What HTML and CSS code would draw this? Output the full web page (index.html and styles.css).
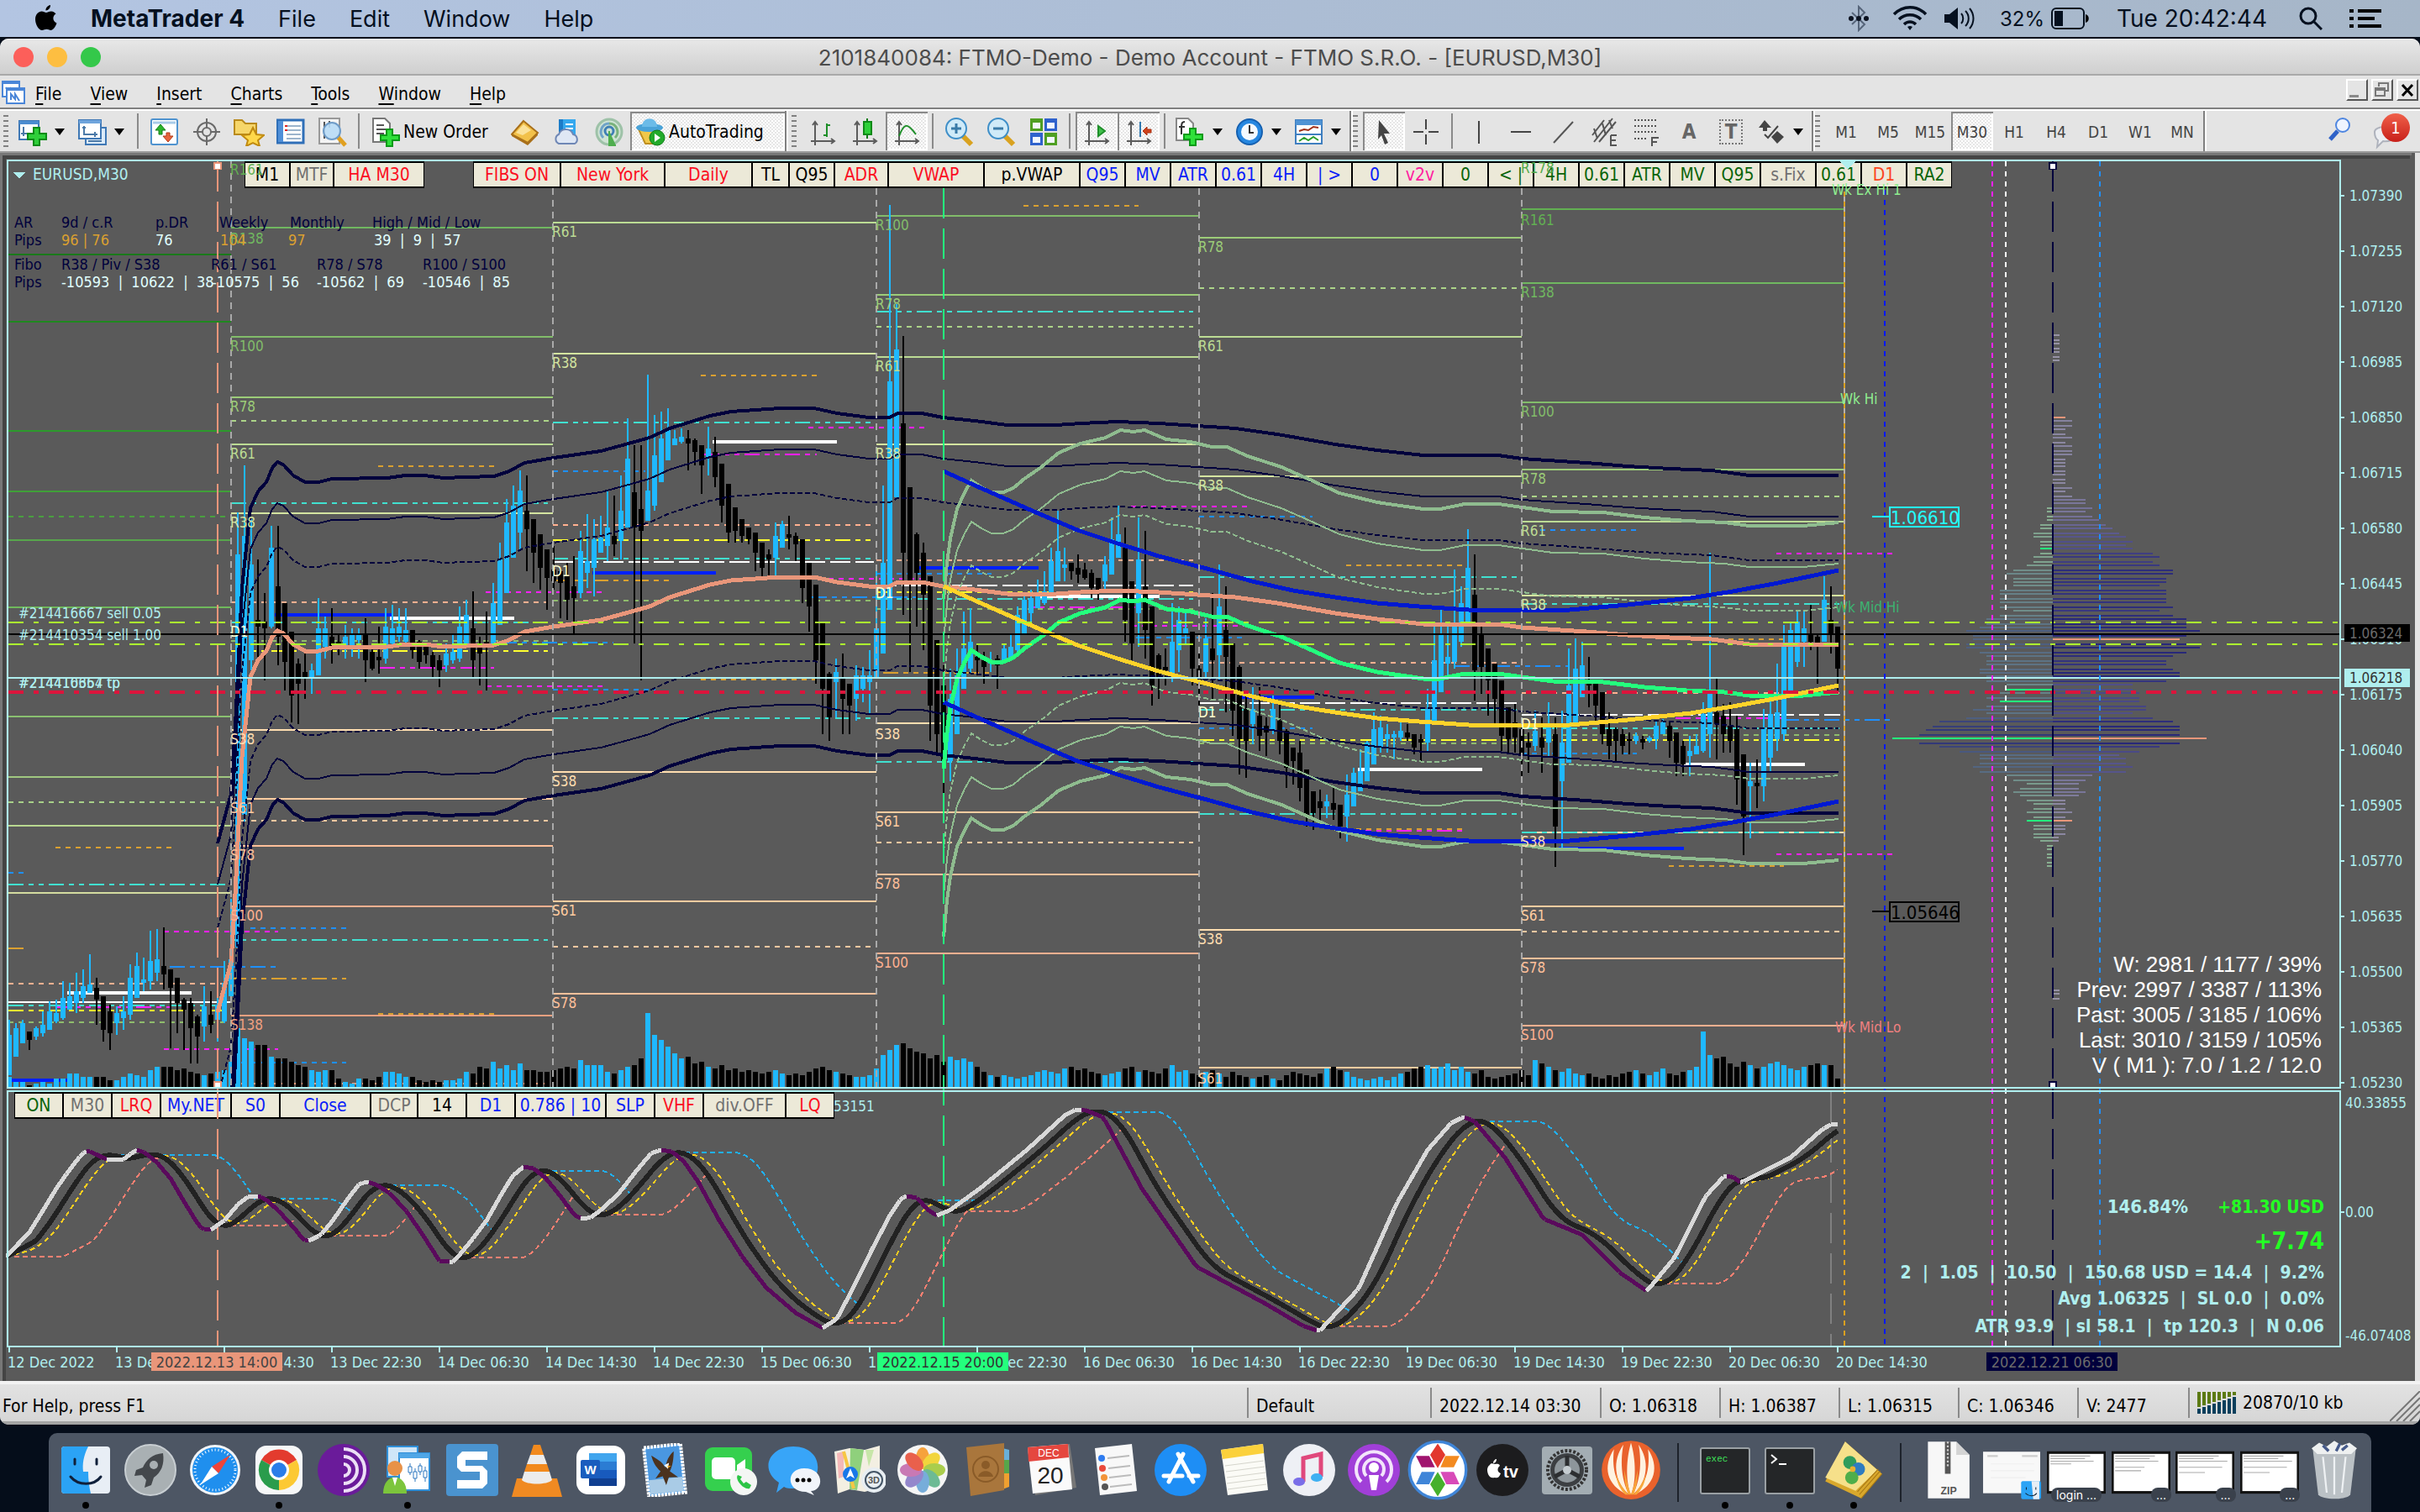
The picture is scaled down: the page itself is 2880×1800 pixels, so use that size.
FILE: index.html
```html
<!DOCTYPE html>
<html lang="en">
<head>
    <meta charset="UTF-8">
    <meta name="viewport" content="width=device-width, initial-scale=1.0">
    <title>MetaTrader 4</title>
    <link rel="stylesheet" href="styles.css">
</head>
<body>
    <!-- macOS menu bar -->
    <header class="menubar">
        <button class="apple" aria-label="Apple menu">
            <svg width="26" height="32" viewBox="0 0 26 32"><path d="M18 0c.3 3-2.500 6.500-5.500 6.500C12 3.500 15 .5 18 0zM13 9c1.500 0 3-1.500 6-1.500 2.500 0 4.500 1.500 5.500 3-4.500 2.500-4 9 1 11C24 26 21 30 18.500 30c-2 0-3-1.200-5-1.200S10 30 8 30C4 30 0 23 0 17c0-6 4-9.500 7.500-9.500C10 7.500 11.500 9 13 9z"/></svg>
        </button>
        <strong>MetaTrader 4</strong>
        <button>File</button>
        <button>Edit</button>
        <button>Window</button>
        <button>Help</button>
        <div class="status">
            <svg width="24" height="32" viewBox="0 0 24 32" fill="none" stroke="#56657a" stroke-width="2"><path d="M4 9l15 14-7 7V2l7 7L4 23"/><g fill="#0b1220" stroke="none"><circle cx="3" cy="16" r="3"/><circle cx="12" cy="16" r="3"/><circle cx="21" cy="16" r="3"/></g></svg>
            <svg class="wifi" width="42" height="30" viewBox="0 0 42 30" fill="none" stroke="#05101f" stroke-width="3.500"><path d="M2 10C13-1 29-1 40 10M8 16c7-7 19-7 26 0M14 22c4-4 10-4 14 0"/><path d="M18 25a5 5 0 0 1 6 0l-3 4z" fill="#05101f" stroke="none"/></svg>
            <svg width="36" height="28" viewBox="0 0 36 28" fill="none" stroke="#05101f" stroke-width="2"><path d="M0 9h6l10-8v26L6 19H0z" fill="#05101f" stroke="none"/><path d="M20 8c3 3 3 9 0 12M25 5c5 5 5 13 0 18M30 2c6 7 6 17 0 24"/></svg>
            <span class="pct">32%</span>
            <svg class="battery" width="46" height="26" viewBox="0 0 46 26"><rect x="1" y="1" width="38" height="24" rx="5" fill="none" stroke="#05101f" stroke-width="2"/><rect x="4" y="4" width="10" height="18" fill="#05101f"/><path d="M41 8c5 1 5 9 0 10z"/></svg>
            <time>Tue 20:42:44</time>
            <svg class="glass" width="28" height="28" viewBox="0 0 28 28" fill="none" stroke="#05101f" stroke-width="3"><circle cx="11" cy="11" r="9"/><path d="M18 18l9 9"/></svg>
            <svg width="38" height="22" viewBox="0 0 38 22"><path d="M0 0h5v4H0zM10 0h28v4H10zM0 9h5v4H0zM10 9h20v4H10zM0 18h5v4H0zM10 18h28v4H10z"/></svg>
        </div>
    </header>

    <main class="window">
        <div class="titlebar">
            <div class="lights">
                <button class="close" aria-label="Close"></button>
                <button class="mini" aria-label="Minimize"></button>
                <button class="zoom" aria-label="Zoom"></button>
            </div>
            <h1>2101840084: FTMO-Demo - Demo Account - FTMO S.R.O. - [EURUSD,M30]</h1>
        </div>

        <nav class="appmenu">
            <svg width="30" height="30" viewBox="0 0 30 30" fill="#fff" stroke="#4a86d8" stroke-width="2"><rect x="3" y="2" width="20" height="18"/><path d="M3 4h20M7 9l3 6 3-6" /><rect x="8" y="10" width="21" height="18"/><path d="M8 12h21M13 24v-7l5 6v-6l5 8"/></svg>
            <button><u>F</u>ile</button>
            <button><u>V</u>iew</button>
            <button><u>I</u>nsert</button>
            <button><u>C</u>harts</button>
            <button><u>T</u>ools</button>
            <button><u>W</u>indow</button>
            <button><u>H</u>elp</button>
            <div class="mdi">
                <button aria-label="Minimize chart"><svg width="22" height="22"><path d="M2 17h11v3H2z" fill="#888"/></svg></button>
                <button aria-label="Restore chart"><svg width="22" height="22" fill="none" stroke="#777" stroke-width="2"><path d="M7 7V3h11v9h-3M3 9h11v9H3zM3 11h11"/></svg></button>
                <button aria-label="Close chart"><svg width="22" height="22" stroke="#000" stroke-width="3"><path d="M5 5l12 13M17 5L5 18"/></svg></button>
            </div>
        </nav>

        <div class="toolbar">
            <div class="group">
                <i class="grip"></i>
                <button class="drop" aria-label="New chart"><svg width="34" height="34" viewBox="0 0 34 34"><rect x="1" y="4" width="23" height="22" fill="#fff" stroke="#3f78b5" stroke-width="2"/><path d="M1 4h23v4H1z" fill="#4b8cd0"/><path d="M6 11v11M3 19h12" stroke="#4c7aa8" stroke-width="2"/><path d="M18 12h7v7h8v7h-8v7h-7v-7h-7v-7h7z" fill="#2fcf3a" stroke="#0a8a18" stroke-width="2"/></svg><b></b></button>
                <button class="drop" aria-label="Profiles"><svg width="34" height="34" viewBox="0 0 34 34"><rect x="9" y="12" width="24" height="20" fill="#dcebf8" stroke="#3f78b5" stroke-width="2"/><rect x="1" y="3" width="26" height="22" fill="#fff" stroke="#3f78b5" stroke-width="2"/><path d="M1 3h26v4H1z" fill="#6fa4dc"/><path d="M7 10v10h16M5 12h4M20 17v6M12 28h16" stroke="#4c7aa8" stroke-width="2" fill="none"/></svg><b></b></button>
                <i class="sep"></i>
                <button aria-label="Market Watch"><svg width="34" height="34" viewBox="0 0 34 34"><rect x="1" y="2" width="31" height="30" rx="2" fill="#fff" stroke="#4f93cf" stroke-width="2"/><path d="M3 6h27" stroke="#a8cbe8" stroke-width="3"/><path d="M12 8l6 7h-4v5h-4v-5H6z" fill="#2db52d" stroke="#14801a"/><path d="M21 29l6-7h-4v-4h-4v4h-4z" fill="#e8643c" stroke="#b03a18"/></svg></button>
                <button aria-label="Data Window"><svg width="34" height="34" viewBox="0 0 34 34" fill="none" stroke="#6a6a6a" stroke-width="2"><circle cx="17" cy="17" r="11"/><circle cx="17" cy="17" r="5"/><path d="M17 1v12M17 21v12M1 17h12M21 17h12"/></svg></button>
                <button aria-label="Navigator"><svg width="38" height="34" viewBox="0 0 38 34"><path d="M2 3h9l4 4h13v13H2z" fill="#f6d66a" stroke="#b98a1c" stroke-width="2"/><path d="M24 12l4 8 9 1-7 6 2 7-8-4-8 4 2-7-7-6 9-1z" fill="#ffd84a" stroke="#c08a10" stroke-width="2"/></svg></button>
                <button aria-label="Terminal"><svg width="34" height="34" viewBox="0 0 34 34"><rect x="1" y="3" width="31" height="27" fill="#fff" stroke="#2f6fb8" stroke-width="3"/><path d="M2 4h6v25H2z" fill="#4f8fd8"/><path d="M12 10h17M12 15h17M12 20h17M12 25h17" stroke="#9bb4cc" stroke-width="2"/><path d="M10 10h3M10 15h3" stroke="#e02020" stroke-width="2"/></svg></button>
                <button aria-label="Strategy Tester"><svg width="36" height="36" viewBox="0 0 36 36"><rect x="2" y="2" width="24" height="30" fill="#f4f4f4" stroke="#999" stroke-width="2"/><path d="M8 6v20M14 5v8" stroke="#555" stroke-width="2"/><path d="M24 24l9 10" stroke="#e0a020" stroke-width="5"/><circle cx="17" cy="17" r="10" fill="#b8dcf6" fill-opacity=".9" stroke="#6f9cc8" stroke-width="2"/></svg></button>
                <i class="sep"></i>
                <button class="wide order"><svg width="36" height="36" viewBox="0 0 36 36"><path d="M2 2h14l6 6v22H2z" fill="#fff" stroke="#777" stroke-width="2"/><path d="M6 10h9M6 15h11M6 20h9" stroke="#555" stroke-width="2"/><path d="M18 15h7v7h8v6h-8v7h-7v-7h-7v-6h7z" fill="#2fe03a" stroke="#0a9a18" stroke-width="2"/></svg>New Order</button>
                <button aria-label="MetaEditor"><svg width="34" height="34" viewBox="0 0 34 34"><path d="M15 4l17 14-12 12L1 20z" fill="#f2c14a" stroke="#a9701a" stroke-width="2"/><path d="M1 20l19 10 12-12v3L20 33 1 22z" fill="#a9701a"/><path d="M15 8l9 7-10 6-8-3z" fill="#fbe29a"/></svg></button>
                <button aria-label="Virtual hosting"><svg width="36" height="34" viewBox="0 0 36 34"><path d="M8 2h20v20H8z" fill="#35a8ee"/><path d="M8 2h5v20H8z" fill="#1b7cc8"/><path d="M16 8h9M16 13h9" stroke="#fff" stroke-width="2"/><path d="M8 31a6 6 0 0 1 0-11 9 9 0 0 1 17 0 6 6 0 0 1 2 11z" fill="#dfe7f4" stroke="#6f87b5" stroke-width="2"/></svg></button>
                <button aria-label="Signals"><svg width="34" height="34" viewBox="0 0 34 34" fill="none" stroke-width="3"><circle cx="17" cy="17" r="15" fill="#cfe3d4" stroke="#9ec2a8"/><path d="M17 7a10 10 0 0 0-7 17" stroke="#6fa3c8"/><path d="M17 7a10 10 0 0 1 7 17" stroke="#79b27d"/><circle cx="17" cy="16" r="5" stroke="#3f7fb5"/><path d="M17 16v17h8" fill="#4fae4f" stroke="#4fae4f" stroke-width="2"/></svg></button>
                <button class="wide auto pressed"><svg width="36" height="34" viewBox="0 0 36 34"><path d="M4 14h24l-6 17H12z" fill="#f1c84a" stroke="#c08f1e" stroke-width="2"/><ellipse cx="17" cy="12" rx="16" ry="5" fill="#4aa3d8"/><path d="M8 11C8-2 26-2 26 11z" fill="#6bbbe8"/><circle cx="26" cy="24" r="9" fill="#22aa2a" stroke="#0e7a16"/><path d="M23 19l7 5-7 5z" fill="#fff"/></svg>AutoTrading</button>
            </div>
            <div class="group">
                <i class="grip"></i>
                <button aria-label="Bar chart"><svg width="34" height="34" viewBox="0 0 34 34" fill="none" stroke="#5c5c5c" stroke-width="2"><path d="M8 5v28M3 28h28M5 9l3-4 3 4M27 25l4 3-4 3"/><path d="M22 7v16M22 9h4M18 21h4" stroke="#1f8f2a"/></svg></button>
                <button aria-label="Candlesticks"><svg width="34" height="34" viewBox="0 0 34 34" fill="none" stroke="#5c5c5c" stroke-width="2"><path d="M8 5v28M3 28h28M5 9l3-4 3 4M27 25l4 3-4 3"/><path d="M20 1v24" stroke="#0f7a18"/><path d="M16 5h9v15h-9z" fill="#2fd03a" stroke="#0f8a18"/></svg></button>
                <button class="pressed" aria-label="Line chart"><svg width="34" height="34" viewBox="0 0 34 34" fill="none" stroke="#5c5c5c" stroke-width="2"><path d="M8 5v28M3 28h28M5 9l3-4 3 4M27 25l4 3-4 3"/><path d="M8 22c6-16 10-16 20-2" stroke="#1f8f2a"/></svg></button>
                <i class="sep"></i>
                <button aria-label="Zoom in"><svg width="36" height="36" viewBox="0 0 36 36"><path d="M21 22l11 11" stroke="#d9a21f" stroke-width="6"/><circle cx="14" cy="14" r="12" fill="#cfeaf8" stroke="#3f8fc8" stroke-width="2"/><path d="M14 8v12M8 14h12" stroke="#3a7ba8" stroke-width="3"/></svg></button>
                <button aria-label="Zoom out"><svg width="36" height="36" viewBox="0 0 36 36"><path d="M21 22l11 11" stroke="#d9a21f" stroke-width="6"/><circle cx="14" cy="14" r="12" fill="#cfeaf8" stroke="#3f8fc8" stroke-width="2"/><path d="M8 14h12" stroke="#3a7ba8" stroke-width="3"/></svg></button>
                <button aria-label="Tile windows"><svg width="34" height="34" viewBox="0 0 34 34"><path d="M1 1h15v15H1zM18 18h15v15H18z" fill="#4f9f22"/><path d="M18 1h15v15H18zM1 18h15v15H1z" fill="#2f62cc"/><path d="M4 6h9v7H4zM21 6h9v7h-9zM4 23h9v7H4zM21 23h9v7h-9z" fill="#f2f6ff"/></svg></button>
                <i class="sep"></i>
                <button class="pressed" aria-label="Auto scroll"><svg width="34" height="34" viewBox="0 0 34 34" fill="none" stroke="#5c5c5c" stroke-width="2"><path d="M8 5v28M3 28h28M5 9l3-4 3 4M27 25l4 3-4 3"/><path d="M19 10l8 6-8 6z" fill="#3fc04a" stroke="#1f8f2a"/></svg></button>
                <button class="pressed" aria-label="Chart shift"><svg width="34" height="34" viewBox="0 0 34 34" fill="none" stroke="#5c5c5c" stroke-width="2"><path d="M8 5v28M3 28h28M5 9l3-4 3 4M27 25l4 3-4 3"/><path d="M19 5v18" stroke="#2f78b0"/><path d="M22 16l5-5v3h5v4h-5v3z" fill="#d0421c" stroke="#a83010" stroke-width="1"/></svg></button>
                <i class="sep"></i>
                <button class="drop" aria-label="Indicators"><svg width="36" height="36" viewBox="0 0 36 36"><path d="M2 2h14l6 6v20H2z" fill="#fff" stroke="#888" stroke-width="2"/><path d="M12 6c-4 0-4 3-4 8v7M5 12h7" stroke="#333" stroke-width="2" fill="none"/><path d="M18 14h7v7h8v6h-8v7h-7v-7h-7v-6h7z" fill="#2fe03a" stroke="#0a9a18" stroke-width="2"/></svg><b></b></button>
                <button class="drop" aria-label="Periods"><svg width="34" height="34" viewBox="0 0 34 34"><circle cx="17" cy="17" r="15" fill="#2687e0" stroke="#1560b0" stroke-width="2"/><circle cx="17" cy="17" r="10" fill="#f4faff"/><path d="M17 9v9h5" stroke="#333" stroke-width="2" fill="none"/></svg><b></b></button>
                <button class="drop" aria-label="Templates"><svg width="34" height="34" viewBox="0 0 34 34"><rect x="1" y="3" width="31" height="28" fill="#fff" stroke="#3f7fc0" stroke-width="2"/><path d="M1 3h31v6H1z" fill="#4f93d4"/><path d="M1 20h31" stroke="#3f7fc0" stroke-width="2"/><path d="M5 16l6-2 5 1 6-4 6 1" stroke="#a03018" stroke-width="2" fill="none"/><path d="M5 28l6-4 5 3 6-4 6 4" stroke="#2f9f2f" stroke-width="2" fill="none"/></svg><b></b></button>
            </div>
            <div class="group">
                <i class="grip"></i>
                <button class="pressed" aria-label="Cursor"><svg width="34" height="34" viewBox="0 0 34 34"><path d="M11 3l13 16h-7l5 11-4 2-4-11-4 5z" fill="#444"/></svg></button>
                <button aria-label="Crosshair"><svg width="34" height="34" viewBox="0 0 34 34" stroke="#444" stroke-width="2"><path d="M17 2v12M17 20v12M2 17h12M20 17h12"/></svg></button>
                <i class="sep"></i>
                <button aria-label="Vertical line"><svg width="34" height="34" stroke="#444" stroke-width="2"><path d="M17 4v27"/></svg></button>
                <button aria-label="Horizontal line"><svg width="34" height="34" stroke="#444" stroke-width="2"><path d="M5 17h24"/></svg></button>
                <button aria-label="Trendline"><svg width="34" height="34" stroke="#555" stroke-width="2"><path d="M6 30L29 5"/></svg></button>
                <button aria-label="Equidistant channel"><svg width="34" height="36" stroke="#555" stroke-width="2" fill="none"><path d="M2 22L16 4M4 30L26 2M10 30L30 6M4 14l4 12M14 8l4 14M22 4l4 10M24 22v12h7M24 28h6M24 22h7"/></svg></button>
                <button aria-label="Fibonacci"><svg width="34" height="36" stroke="#555" stroke-width="2" fill="none"><path d="M2 4h28M2 11h28M2 18h28M2 26h16" stroke-dasharray="2 2"/><path d="M23 35V25h8M23 30h6"/></svg></button>
                <button class="letter">A</button>
                <button class="letter boxed"><span>T</span></button>
                <button class="drop" aria-label="Arrows"><svg width="34" height="34" viewBox="0 0 34 34" fill="#444"><path d="M9 3l8 9h-5v4H7v-4H2zM24 31l8-8-8-7-7 7z"/><path d="M9 20l4 4 12-14" stroke="#444" stroke-width="2" fill="none"/></svg><b></b></button>
            </div>
            <div class="group frames">
                <i class="grip"></i>
                <button>M1</button>
                <button>M5</button>
                <button>M15</button>
                <button class="pressed">M30</button>
                <button>H1</button>
                <button>H4</button>
                <button>D1</button>
                <button>W1</button>
                <button>MN</button>
            </div>
            <div class="right">
                <button aria-label="Search"><svg width="30" height="30" viewBox="0 0 30 30" fill="none"><path d="M12 17L3 27" stroke="#2f62c8" stroke-width="5"/><circle cx="18" cy="10" r="8" fill="#eef4ff" stroke="#4f86e0" stroke-width="2"/></svg></button>
                <button class="chat" aria-label="Notifications"><svg width="34" height="34" viewBox="0 0 34 34"><path d="M4 12c0-8 24-8 24 3 0 7-8 9-14 8l-7 7 1-8c-3-2-4-5-4-10z" fill="#eceef2" stroke="#aeb2bc" stroke-width="2"/></svg><span>1</span></button>
            </div>
        </div>

        <section class="chart">
            <div class="panel top">
                <button class="w54 k">M1</button><button class="w52 g">MTF</button><button class="w108 r">HA M30</button>
                <i></i>
                <button class="w104 r">FIBS ON</button><button class="w124 r">New York</button><button class="w104 r">Daily</button><button class="w44 k">TL</button><button class="w54 k">Q95</button><button class="w64 r">ADR</button><button class="w114 r">VWAP</button><button class="w114 k">p.VWAP</button><button class="w54 b">Q95</button><button class="w54 b">MV</button><button class="w54 b">ATR</button><button class="w54 b">0.61</button><button class="w54 b">4H</button><button class="w54 b">|&nbsp;&gt;</button><button class="w54 b">0</button><button class="w54 p">v2v</button><button class="w54 n">0</button><button class="w54 n">&lt;&nbsp;|</button><button class="w54 n">4H</button><button class="w54 n">0.61</button><button class="w54 n">ATR</button><button class="w54 n">MV</button><button class="w54 n">Q95</button><button class="w66 g">s.Fix</button><button class="w54 n">0.61</button><button class="w54 o">D1</button><button class="w54 n">RA2</button>
            </div>
            <div class="panel bottom">
                <button class="w58 n">ON</button><button class="w58 g">M30</button><button class="w58 r">LRQ</button><button class="w84 b">My.NET</button><button class="w58 b">S0</button><button class="w108 b">Close</button><button class="w56 g">DCP</button><button class="w58 k">14</button><button class="w58 b">D1</button><button class="w108 b">0.786&nbsp;|&nbsp;10</button><button class="w58 b">SLP</button><button class="w58 r">VHF</button><button class="w98 g">div.OFF</button><button class="w58 r">LQ</button>
            </div>
            <svg id="chart" viewBox="0 182 2880 1462" role="img" aria-label="EURUSD M30 chart"></svg>
        </section>

        <footer class="statusbar">
            <span class="help">For Help, press F1</span>
            <span class="c-profile">Default</span>
            <span class="c-date">2022.12.14 03:30</span>
            <span class="c-price">O: 1.06318</span>
            <span class="c-price">H: 1.06387</span>
            <span class="c-price">L: 1.06315</span>
            <span class="c-price">C: 1.06346</span>
            <span class="c-vol">V: 2477</span>
            <span class="c-net">
                <svg width="48" height="26" viewBox="0 0 48 26"><path d="M0 0h4v18H0zM6 0h4v16H6zM12 0h4v14h-4zM18 0h4v12h-4zM24 0h4v10h-4zM30 0h4v8h-4zM36 0h4v6h-4zM42 0h4v4h-4z" fill="#5c7a14"/><path d="M0 20h4v6H0zM6 18h4v8H6zM12 16h4v10h-4zM18 14h4v12h-4zM24 12h4v14h-4zM30 10h4v16h-4zM36 8h4v18h-4zM42 6h4v20h-4z" fill="#0a3f5c"/></svg>
                20870/10 kb
            </span>
            <svg class="sizer" width="36" height="36" stroke="#777" stroke-width="2"><path d="M0 36L36 0M8 36L36 8M16 36l20-20M24 36l12-12"/></svg>
        </footer>
    </main>

    <!-- Dock -->
    <nav class="dock">
        <button class="run" aria-label="Finder"><svg viewBox="0 0 64 64"><rect x="3" y="4" width="58" height="56" rx="4" fill="#e8eef5"/><path d="M7 4h28c-6 12-7 21-6 30h6c0 9 1 18 3 26H7a4 4 0 0 1-4-4V8a4 4 0 0 1 4-4z" fill="#2ba3f5"/><path d="M19 19v6M45 19v6M14 40c9 11 28 11 36 0" stroke="#10203a" stroke-width="3" fill="none" stroke-linecap="round"/></svg></button>
        <button aria-label="Launchpad"><svg viewBox="0 0 64 64"><circle cx="32" cy="32" r="30" fill="#a9b0b3" stroke="#c8ced2" stroke-width="2"/><path d="M47 12c-13 1-20 8-24 17l-8 3-2 7 9-1 5 6-2 9 8-3 3-9c9-6 13-16 11-29z" fill="#44484c"/><circle cx="36" cy="26" r="5" fill="#a9b0b3"/></svg></button>
        <button aria-label="Safari"><svg viewBox="0 0 64 64"><circle cx="32" cy="32" r="30" fill="#f3f5f7"/><circle cx="32" cy="32" r="27" fill="#1f8fee"/><circle cx="32" cy="32" r="24" fill="none" stroke="#fff" stroke-width="3" stroke-dasharray="1 3"/><path d="M50 14L28 28l8 8z" fill="#f04438"/><path d="M14 50l14-22 8 8z" fill="#fff"/></svg></button>
        <button class="run" aria-label="Chrome"><svg viewBox="0 0 64 64"><rect x="4" y="3" width="56" height="58" rx="13" fill="#f6f7f8"/><path d="M32 32L11 20a24 24 0 0 1 42 0z" fill="#e33b2e"/><path d="M32 32L53 20a24 24 0 0 1-21 36z" fill="#fcc934"/><path d="M32 32v24A24 24 0 0 1 11 20z" fill="#2a9c4c"/><circle cx="32" cy="32" r="12" fill="#fff"/><circle cx="32" cy="32" r="9" fill="#2a7de8"/></svg></button>
        <button aria-label="Tor Browser"><svg viewBox="0 0 64 64"><circle cx="32" cy="32" r="31" fill="#6a1b9a"/><g fill="none" stroke="#ecdff5" stroke-width="4"><path d="M32 7a25 25 0 0 1 0 50M32 16a16 16 0 0 1 0 32M32 25a7 7 0 0 1 0 14"/></g></svg></button>
        <button class="run" aria-label="MetaTrader"><svg viewBox="0 0 64 64"><rect x="8" y="4" width="36" height="36" fill="#cfe6f8" stroke="#2f8fd8" stroke-width="2"/><rect x="22" y="12" width="36" height="44" fill="#fff" stroke="#2f8fd8" stroke-width="2"/><path d="M22 12h36v6H22z" fill="#4fa6e6"/><path d="M35 24v14M41 30v16M47 24v14M53 28v18" stroke="#2f78c0"/><path d="M33 28h4v7h-4zM39 34h4v8h-4zM45 27h4v7h-4zM51 33h4v8h-4z" fill="#fff" stroke="#2f78c0"/><circle cx="17" cy="30" r="9" fill="#e89248"/><path d="M3 60c0-26 28-26 28 0z" fill="#7cc53c"/><path d="M14 41h6l-3 10z" fill="#fff"/></svg></button>
        <button aria-label="Snagit"><svg viewBox="0 0 64 64"><rect x="1" y="1" width="62" height="62" rx="4" fill="#4a93cf"/><path d="M50 10H20l-6 6v13l5 5h22v10H14v10h30l6-6V33l-6-6H24v-7h26z" fill="#fff"/></svg></button>
        <button aria-label="VLC"><svg viewBox="0 0 64 64"><path d="M8 42h48l6 22H2z" fill="#f08a22"/><path d="M28 2h8l4 12H24z" fill="#f28a1e"/><path d="M24 14h16l4 11H20z" fill="#ececec"/><path d="M20 25h24l3 9H17z" fill="#f28a1e"/><path d="M17 34h30l3 10c-6 6-30 6-36 0z" fill="#ececec"/></svg></button>
        <button aria-label="Word"><svg viewBox="0 0 64 64"><rect x="3" y="3" width="58" height="58" rx="14" fill="#fff"/><path d="M18 12h33v10H18z" fill="#41a5ee"/><path d="M18 22h33v10H18z" fill="#2b7cd3"/><path d="M18 32h33v10H18z" fill="#185abd"/><path d="M18 42h33v9H18z" fill="#103f91"/><rect x="8" y="20" width="23" height="22" rx="2" fill="#1a5dbe"/><text x="19.500" y="37" text-anchor="middle">W</text></svg></button>
        <button aria-label="Mail"><svg viewBox="0 0 64 64"><g transform="rotate(-6 32 32)"><rect x="9" y="3" width="44" height="58" fill="#4a97e0" stroke="#fff" stroke-width="4" stroke-dasharray="3 1"/><path d="M11 42h40v17H11z" fill="#a9cbe6"/><path d="M17 13c6 5 12 8 15 16 3-8 5-13 12-18-1 9-3 17-7 23l9 8-11-1-4 9-3-11-9 2 7-8c-5-6-8-12-9-20z" fill="#4b321e"/><path d="M31 26l6-2-2 7z" fill="#fff"/><path d="M35 27l4 1-4 2z" fill="#f0a020"/></g></svg></button>
        <button aria-label="FaceTime"><svg viewBox="0 0 64 64"><rect x="2" y="5" width="56" height="52" rx="9" fill="#35d04e"/><rect x="10" y="17" width="28" height="26" rx="5" fill="#fff"/><path d="M40 26l10-7v22l-10-7z" fill="#fff"/><circle cx="48" cy="46" r="16" fill="#f4f6f4"/><path d="M41 38c-4 5 7 18 14 16l2-4-6-4-3 2-4-5 2-3z" fill="#2cc546"/></svg></button>
        <button aria-label="Messages"><svg viewBox="0 0 64 64"><path d="M31 4c40 0 38 50 0 50-4 0-8 0-11-2l-9 7 3-12C-10 31 3 4 31 4z" fill="#38a5f8"/><path d="M44 30c24 0 24 26 8 27l4 5-10-4c-24 0-24-28-2-28z" fill="#f1f5fa"/><circle cx="36" cy="44" r="2.500"/><circle cx="43" cy="44" r="2.500"/><circle cx="50" cy="44" r="2.500"/></svg></button>
        <button aria-label="Maps"><svg viewBox="0 0 64 64"><path d="M3 10l18-4 18 2 18-5v50l-18 5-18-3-14 5z" fill="#f3efe2"/><path d="M22 6l16 2-8 48-9-1z" fill="#8fd07c"/><path d="M40 8l10 0-6 20z" fill="#c7e6a8"/><path d="M6 12l8-2v30l-6 2z" fill="#f4b8b8"/><path d="M14 10l12 44" stroke="#f7c644" stroke-width="4"/><circle cx="22" cy="37" r="9" fill="#1877e8"/><path d="M22 30l5 12-5-3-5 3z" fill="#fff"/><circle cx="50" cy="44" r="15" fill="#e8eef2"/><circle cx="50" cy="44" r="10" fill="none" stroke="#456" stroke-width="2"/><text x="50" y="48" class="small" text-anchor="middle">3D</text></svg></button>
        <button aria-label="Photos"><svg viewBox="0 0 64 64"><circle cx="32" cy="32" r="30" fill="#f5f5f5"/><g opacity=".9"><ellipse cx="32" cy="18" rx="8" ry="13" fill="#f79a2a"/><ellipse cx="32" cy="18" rx="8" ry="13" fill="#f2d22a" transform="rotate(45 32 32)"/><ellipse cx="32" cy="18" rx="8" ry="13" fill="#a2c93a" transform="rotate(90 32 32)"/><ellipse cx="32" cy="18" rx="8" ry="13" fill="#5fb48a" transform="rotate(135 32 32)"/><ellipse cx="32" cy="18" rx="8" ry="13" fill="#6aa6d8" transform="rotate(180 32 32)"/><ellipse cx="32" cy="18" rx="8" ry="13" fill="#8a7cc8" transform="rotate(225 32 32)"/><ellipse cx="32" cy="18" rx="8" ry="13" fill="#c56cae" transform="rotate(270 32 32)"/><ellipse cx="32" cy="18" rx="8" ry="13" fill="#e8503a" transform="rotate(315 32 32)"/></g></svg></button>
        <button aria-label="Contacts"><svg viewBox="0 0 64 64"><path d="M50 6l8 2v12h-8z" fill="#6ab0d8"/><path d="M50 20h8v16h-8z" fill="#57a64a"/><path d="M50 36h8v16l-8 3z" fill="#f0a030"/><path d="M7 5l45-5v56L12 63z" fill="#a9763c"/><circle cx="30" cy="31" r="15" fill="none" stroke="#8a5b28" stroke-width="2"/><circle cx="30" cy="26" r="5" fill="#8a5b28"/><path d="M21 40c2-9 16-9 18 0z" fill="#8a5b28"/></svg></button>
        <button aria-label="Calendar"><svg viewBox="0 0 64 64"><path d="M6 5l47-4 8 52-49 9z" fill="#777"/><path d="M3 5l48-4 5 54-47 5z" fill="#fafafa"/><path d="M3 5l48-4 1 16-48 5z" fill="#e5473f"/><text x="28" y="16" class="cal" text-anchor="middle">DEC</text><text x="30" y="48" class="day" text-anchor="middle">20</text></svg></button>
        <button aria-label="Reminders"><svg viewBox="0 0 64 64"><path d="M7 6l44-5 6 56-44 5z" fill="#f8f8f8"/><path d="M22 18l26-3M23 30l26-3M24 41l26-3M25 52l26-3" stroke="#bbb" stroke-width="2"/><circle cx="15" cy="18" r="4" fill="#2f7cf0"/><circle cx="16" cy="30" r="4" fill="#ea4a3c"/><circle cx="18" cy="41" r="4" fill="#f2943a"/><circle cx="19" cy="52" r="4" fill="#555"/></svg></button>
        <button aria-label="App Store"><svg viewBox="0 0 64 64"><circle cx="32" cy="32" r="31" fill="#1e8ef5"/><path d="M35 13L18 46M29 13l18 33M12 39h22M42 39h11" stroke="#fff" stroke-width="5" stroke-linecap="round"/></svg></button>
        <button aria-label="Notes"><svg viewBox="0 0 64 64"><path d="M3 8l50-7 6 55-48 6z" fill="#fbfbf6"/><path d="M3 8l50-7 1 11-49 7z" fill="#fbd13c"/><path d="M8 27l46-6M9 34l46-6M10 41l46-6M10 48l46-6M11 55l46-6" stroke="#d5d5cc" stroke-width="1"/></svg></button>
        <button aria-label="Music"><svg viewBox="0 0 64 64"><circle cx="32" cy="32" r="31" fill="#eef0f5"/><path d="M25 46V18l21-5v27" fill="none" stroke="#e0487c" stroke-width="5"/><ellipse cx="20" cy="46" rx="7" ry="5" fill="#7a6ee8"/><ellipse cx="41" cy="41" rx="7" ry="5" fill="#3fb0f2"/></svg></button>
        <button aria-label="Podcasts"><svg viewBox="0 0 64 64"><circle cx="32" cy="32" r="31" fill="#a13fd8"/><g fill="none" stroke="#f3e4fb" stroke-width="4"><path d="M17 46a21 21 0 1 1 30 0M23 39a12 12 0 1 1 18 0"/></g><circle cx="32" cy="29" r="6" fill="#fff"/><path d="M26 38h12l-3 18h-6z" fill="#fff"/></svg></button>
        <button class="big" aria-label="Pinwheel"><svg viewBox="0 0 64 64"><circle cx="32" cy="32" r="30" fill="#fff" stroke="#3f85d8" stroke-width="3"/><path d="M32 4l8 12-8 14-8-14z" fill="#e2382e"/><path d="M35 29l5-12h15l-6 12z" fill="#f38a20"/><path d="M35 34h14l6 13H41z" fill="#d84ab8"/><path d="M32 34l8 13-8 13-8-13z" fill="#46b02c"/><path d="M29 34L23 47H9l6-13z" fill="#3f85d8"/><path d="M29 29l-6-12H9l6 12z" fill="#a0146e"/></svg></button>
        <button aria-label="Apple TV"><svg viewBox="0 0 64 64"><circle cx="32" cy="32" r="31" fill="#1c1c1e"/><path d="M17 26c2-3 4-1 6-1 2 0 5-1 6 2-4 3-3 8 1 9-2 5-4 6-7 5-4 1-6 0-8-4-2-5-1-9 2-11zM21 24c0-3 2-5 4-5 0 3-2 5-4 5z" fill="#fff"/><text x="42" y="41" class="tv" text-anchor="middle">tv</text></svg></button>
        <button aria-label="System Preferences"><svg viewBox="0 0 64 64"><rect x="2" y="4" width="60" height="57" rx="4" fill="#a3adb3"/><circle cx="32" cy="32" r="23" fill="none" stroke="#333" stroke-width="4" stroke-dasharray="3 2"/><circle cx="32" cy="32" r="20" fill="#3c3f42"/><circle cx="32" cy="32" r="15" fill="#8e969b"/><path d="M32 32V15M32 32l-15 8M32 32l15 8" stroke="#2c2e30" stroke-width="5"/><circle cx="32" cy="32" r="5" fill="#c5ccd0"/></svg></button>
        <button class="big" aria-label="Fan"><svg viewBox="0 0 64 64"><circle cx="32" cy="32" r="31" fill="#e9622c"/><path d="M32 58C26 44 27 20 32 3c5 17 6 41 0 55zM30 58C14 44 12 22 24 5c-3 15-3 36 6 53zM34 58c16-14 18-36 6-53 3 15 3 36-6 53zM28 58C6 48 2 28 14 10c-2 17 0 34 14 48zM36 58c22-10 26-30 14-48 2 17 0 34-14 48z" fill="#fff2e0"/><path d="M26 58c-6-6-9-13-10-22 3 9 8 16 13 22-3-9-4-17-4-26 2 10 4 18 7 26 3-8 5-16 7-26 0 9-1 17-4 26 5-6 10-13 13-22-1 9-4 16-10 22z" fill="#f8a93a"/></svg></button>
        <i></i>
        <button class="run" aria-label="exec"><svg viewBox="0 0 64 64"><rect x="3" y="6" width="58" height="54" rx="2" fill="#242628" stroke="#9aa0a4" stroke-width="2"/><text x="9" y="22" class="exec">exec</text></svg></button>
        <button class="run" aria-label="Terminal"><svg viewBox="0 0 64 64"><rect x="3" y="6" width="58" height="54" rx="2" fill="#242628" stroke="#9aa0a4" stroke-width="2"/><path d="M10 14l6 5-6 5M19 25h9" stroke="#fff" stroke-width="2" fill="none"/></svg></button>
        <button class="run big" aria-label="MetaTrader 4"><svg viewBox="0 0 64 64"><path d="M23 2l39 34-22 26L2 44z" fill="#d9a82c"/><path d="M23 2l34 30-23 22L2 40z" fill="#f6e08a"/><path d="M62 36L40 62M60 33L38 58M58 31L36 55" stroke="#a87814"/><circle cx="28" cy="24" r="7" fill="#2f9c5c"/><circle cx="37" cy="31" r="7" fill="#2f7cc0"/><circle cx="30" cy="40" r="7" fill="#4fae4a"/><circle cx="31" cy="31" r="3" fill="#e8b030"/></svg></button>
        <i></i>
        <button class="big" aria-label="Archive"><svg viewBox="0 0 64 64"><path d="M11 2h30l14 14v46H11z" fill="#f7f7f7"/><path d="M41 2v14h14z" fill="#d4d4d4"/><rect x="29" y="2" width="6" height="34" fill="#555"/><path d="M32 2v26" stroke="#ccc" stroke-width="2" stroke-dasharray="2 2"/><text x="33" y="58" class="small" text-anchor="middle">ZIP</text></svg></button>
        <button class="flat" aria-label="Finder window"><svg viewBox="0 0 68 60"><rect x="1" y="4" width="66" height="48" fill="#f8f8f8"/><path d="M6 9h12M46 9h18" stroke="#ccc" stroke-width="2"/><path d="M10 18h50M10 26h50M10 34h40" stroke="#eee"/><rect x="45" y="38" width="23" height="21" rx="2" fill="#2ba3f5"/><path d="M57 38h9v21h-7z" fill="#e8eef5"/><path d="M51 45v3M62 45v3M50 52c4 4 10 4 13 0" stroke="#123" fill="none"/></svg></button>
        <button class="flat" aria-label="login"><svg viewBox="0 0 68 60"><rect x="1" y="5" width="66" height="46" fill="#fff" stroke="#111" stroke-width="3"/><path d="M4 9h46M4 12h40M4 15h50M4 18h24" stroke="#aaa"/></svg><small>login ...</small></button>
        <button class="flat" aria-label="Window 2"><svg viewBox="0 0 68 60"><rect x="1" y="5" width="66" height="46" fill="#fff" stroke="#111" stroke-width="3"/><path d="M4 9h46M4 12h40M4 15h50M4 22h34M4 26h30" stroke="#aaa"/></svg><small class="dots">...</small></button>
        <button class="flat" aria-label="Window 3"><svg viewBox="0 0 68 60"><rect x="1" y="5" width="66" height="46" fill="#fff" stroke="#111" stroke-width="3"/><path d="M4 9h46M4 12h40M4 15h56M4 22h50M4 28h30" stroke="#aaa"/></svg><small class="dots">...</small></button>
        <button class="flat" aria-label="Window 4"><svg viewBox="0 0 68 60"><rect x="1" y="5" width="66" height="46" fill="#fff" stroke="#111" stroke-width="3"/><path d="M4 9h46M4 12h40M4 15h56M4 22h50M4 28h30" stroke="#aaa"/></svg><small class="dots">...</small></button>
        <button class="big" aria-label="Trash"><svg viewBox="0 0 64 64"><path d="M9 8h46l-6 50c-4 6-30 6-34 0z" fill="#cfd3d6" fill-opacity=".85"/><path d="M8 9l8-6 8 4 8-6 8 5 8-3 8 6-6 6H14z" fill="#eef0f0"/><path d="M20 6l6 6M38 4l-4 8M46 6l-6 5" stroke="#465a8a" stroke-width="3"/><path d="M20 18l4 38M32 18v40M44 18l-4 38" stroke="#eef1f3" stroke-width="2"/></svg></button>
    </nav>
    <script src="chart.js"></script>
</body>
</html>
```
FILE: styles.css
```css
* {
    box-sizing: border-box;
}
body {
    margin: 0;
    min-height: 100vh;
    display: flex;
    flex-direction: column;
    background: #050d1a;
    font-family: "DejaVu Sans Condensed", "DejaVu Sans", sans-serif;
    color: #000;
    overflow: hidden;
}
button {
    font: inherit;
    color: inherit;
    background: none;
    border: 0;
    padding: 0;
}

/* macOS menu bar */
.menubar {
    height: 44px;
    display: flex;
    align-items: center;
    gap: 40px;
    padding: 0 46px 0 42px;
    background: linear-gradient(90deg, #b3c5e2, #a6b6c8);
    font-family: Inter, sans-serif;
    font-size: 27px;
    color: #05101f;
    margin-bottom: 2px;
}
.menubar svg {
    display: block;
}
.menubar strong {
    font-size: 28px;
    font-weight: 700;
}
.menubar .status {
    margin-left: auto;
    display: flex;
    align-items: center;
    gap: 20px;
}
.status .wifi {
    margin-left: 8px;
}
.status .pct {
    margin-left: 10px;
    font-size: 24px;
}
.status .battery {
    margin-left: -12px;
}
.status time {
    margin-left: 12px;
    font-size: 28px;
}
.status .glass {
    margin: 0 12px 0 18px;
}

/* window */
.window {
    display: flex;
    flex-direction: column;
    background: #e4e4e4;
    border-radius: 10px;
    overflow: hidden;
}
.titlebar {
    height: 44px;
    display: flex;
    align-items: center;
    justify-content: center;
    position: relative;
    padding-top: 2px;
    background: linear-gradient(#e8e8e8, #cfcfcf);
    border-bottom: 2px solid #a9a9a9;
}
.titlebar h1 {
    margin: 0;
    font: 400 26px Inter, sans-serif;
    color: #4c4c4c;
}
.lights {
    position: absolute;
    left: 16px;
    display: flex;
    gap: 16px;
}
.lights button {
    width: 24px;
    height: 24px;
    border-radius: 50%;
}
.close { background: #fc5f5a; }
.mini { background: #fdbe41; }
.zoom { background: #34c84a; }

.appmenu {
    height: 42px;
    display: flex;
    align-items: center;
    gap: 34px;
    font-size: 21px;
    border-bottom: 2px solid #fff;
    box-shadow: inset 0 -2px #808080;
}
.appmenu > svg {
    margin-right: -22px;
}
.appmenu > button {
    padding-top: 4px;
}
.appmenu u {
    text-underline-offset: 4px;
}
.mdi {
    margin-left: auto;
    display: flex;
    gap: 4px;
    align-self: flex-start;
    margin-top: 4px;
    padding-right: 2px;
}
.mdi button {
    width: 26px;
    height: 26px;
    border: 2px solid;
    border-color: #fff #555 #555 #fff;
}
.mdi svg {
    display: block;
}

.toolbar {
    height: 50px;
    display: flex;
    align-items: center;
    border-bottom: 2px solid #9a9a9a;
    font-size: 22px;
}
.group {
    display: flex;
    align-items: center;
    height: 100%;
    border-right: 2px solid #808080;
    box-shadow: 2px 0 #fff;
}
.grip {
    width: 6px;
    height: 38px;
    margin: 0 6px 0 4px;
    background: repeating-linear-gradient(#808080 0 2px, transparent 2px 6px);
}
.group .sep {
    width: 2px;
    height: 42px;
    background: #8a8a8a;
    margin: 0 6px 0 5px;
}
.group button {
    width: 50px;
    height: 46px;
    padding-top: 2px;
    display: flex;
    align-items: center;
    justify-content: center;
}
.group .drop {
    width: 71px;
    gap: 9px;
    padding-right: 4px;
}
.drop b {
    border: 6px solid transparent;
    border-top: 8px solid #000;
    border-bottom: 0;
}
.group .wide {
    justify-content: flex-start;
    font-size: 21px;
}
.group .order {
    width: 166px;
    gap: 2px;
    padding-left: 8px;
}
.group .auto {
    width: 184px;
    gap: 4px;
    padding-left: 6px;
}
.pressed {
    background: repeating-conic-gradient(#fff 0 25%, #e6e6e6 0 50%) 0 0 / 4px 4px;
    box-shadow: inset 2px 2px #8a8a8a, inset -2px -2px #fff;
}
.group + .group .grip {
    margin-left: 6px;
}
.group + .group + .group .grip {
    margin-left: 2px;
}
.letter {
    font-size: 24px;
    font-weight: bold;
    color: #666;
}
.letter span {
    border: 2px dotted #777;
    padding: 0 5px;
    line-height: 26px;
}
.frames {
    font-size: 19px;
    color: #444;
}
.toolbar .right {
    margin-left: auto;
    display: flex;
    align-items: center;
    gap: 22px;
    padding-right: 12px;
}
.chat {
    position: relative;
    width: 46px;
    height: 46px;
    padding-top: 12px;
    text-align: left;
}
.chat span {
    position: absolute;
    top: 2px;
    right: 0;
    width: 34px;
    height: 34px;
    border-radius: 50%;
    background: linear-gradient(#f0604a, #c8201a);
    color: #fff;
    font-size: 20px;
    line-height: 34px;
    text-align: center;
}

/* chart, drawn over the two button panels */
.chart {
    position: relative;
    background: #5a5a5a;
    border-bottom: 4px solid #f2f2f2;
}
.chart > svg {
    display: block;
    position: relative;
    width: 100%;
    height: auto;
    shape-rendering: crispEdges;
    pointer-events: none;
}
#chart text {
    font-size: 17px;
    white-space: pre;
}
#chart .time { font-size: 18px; }
#chart .info { font-size: 18px; }
#chart .sym { font-size: 19px; }
#chart .tag { font-size: 22px; }
#chart .stat { font: 26px "Liberation Sans", Arial, sans-serif; }
#chart .bold { font-size: 21px; font-weight: bold; }
#chart .pct { font-size: 22px; font-weight: bold; }
#chart .profit { font-size: 28px; font-weight: bold; }
.panel {
    position: absolute;
    display: flex;
    font-size: 21px;
}
.panel.top { top: 10px; left: 291px; }
.panel.bottom { top: 1118px; left: 17px; }
.panel i { width: 58px; }
.panel button {
    height: 32px;
    line-height: 28px;
    background: #ece9d8;
    border: 2px solid #000;
    border-left-width: 1px;
    border-right-width: 1px;
    white-space: nowrap;
}
.w44 { width: 44px; }
.w52 { width: 52px; }
.w54 { width: 54px; }
.w56 { width: 56px; }
.w58 { width: 58px; }
.w64 { width: 64px; }
.w66 { width: 66px; }
.w84 { width: 84px; }
.w98 { width: 98px; }
.w104 { width: 104px; }
.w108 { width: 108px; }
.w114 { width: 114px; }
.w124 { width: 124px; }
.k { color: #000; }
.g { color: #707070; }
.r { color: #fb0f1f; }
.b { color: #0a20f8; }
.p { color: #ff1ea0; }
.n { color: #0a640a; }
.o { color: #fb4520; }

/* status bar */
.statusbar {
    position: relative;
    height: 48px;
    display: flex;
    align-items: center;
    font-size: 21px;
    background: linear-gradient(#e2e2e2, #d6d6d6);
    border-bottom: 4px solid #a4a4a4;
}
.statusbar span {
    height: 36px;
    line-height: 44px;
    padding-left: 9px;
    border-left: 2px solid #8a8a8a;
}
.statusbar .help {
    flex: 1;
    padding-left: 3px;
    border: 0;
}
.c-profile { width: 218px; }
.c-date { width: 202px; }
.c-price { width: 142px; }
.c-vol { width: 132px; }
.statusbar .c-net {
    width: 276px;
    display: flex;
    align-items: center;
    gap: 6px;
}
.sizer {
    position: absolute;
    right: 0;
    bottom: 0;
}

/* dock */
.dock {
    flex: 1;
    margin: 10px 58px 0;
    padding: 0 6px;
    display: flex;
    background: #4d5664;
    border-radius: 10px 10px 0 0;
}
.dock button {
    flex: 1;
    position: relative;
    display: flex;
    justify-content: center;
    align-items: flex-start;
    padding-top: 12px;
}
.dock svg {
    width: 64px;
    height: 64px;
}
.dock .big {
    padding-top: 8px;
}
.dock .big svg {
    width: 72px;
    height: 72px;
}
.dock .flat {
    padding-top: 18px;
}
.dock .flat svg {
    width: 70px;
    height: 62px;
}
.dock i {
    width: 35px;
    height: 70px;
    margin-top: 12px;
    background: linear-gradient(#1d222b, #1d222b) center / 2px 100% no-repeat;
}
.dock .run::after {
    content: "";
    position: absolute;
    bottom: 4px;
    width: 8px;
    height: 8px;
    border-radius: 50%;
    background: #000;
}
.dock small {
    position: absolute;
    bottom: 12px;
    padding: 0 6px;
    border-radius: 8px;
    background: #3a414c;
    color: #fff;
    font: 14px Inter, sans-serif;
}
.dock .dots {
    right: 2px;
}
.dock text { font: bold 15px "Liberation Sans", sans-serif; fill: #fff; }
.dock .small { font-size: 11px; fill: #555; }
.dock .cal { font-size: 12px; font-weight: normal; }
.dock .day { font-size: 28px; font-weight: normal; fill: #222; }
.dock .tv { font-size: 20px; }
.dock .exec { font: 11px "Liberation Mono", monospace; fill: #3fe05a; }
```
FILE: chart.js
```js
const svg = document.getElementById('chart');
const NS = 'http://www.w3.org/2000/svg';
const SIX = '6 6', DASHDOT = '18 6 6 6 6 6', LIME = '18 12 6 12';

function el(name, attrs, parent) {
    const node = document.createElementNS(NS, name);
    for (const key in attrs) node.setAttribute(key, attrs[key]);
    (parent || svg).appendChild(node);
    return node;
}
function hline(x1, x2, y, color, dash, width) {
    el('line', { x1, x2, y1: y, y2: y, stroke: color, 'stroke-width': width || 2, 'stroke-dasharray': dash || 'none' }, main);
}
function vline(x, y1, y2, color, dash, width) {
    el('line', { x1: x, x2: x, y1, y2, stroke: color, 'stroke-width': width || 2, 'stroke-dasharray': dash || 'none' });
}
function box(x, y, width, height, fill, parent) {
    el('rect', { x, y, width, height, fill }, parent);
}
function text(x, y, str, fill, cls, anchor) {
    el('text', { x, y, fill, class: cls || '', 'text-anchor': anchor || 'start' }).textContent = str;
}
function curve(points, dy, color, width, dash, parent) {
    el('polyline', {
        points: points.map(p => p[0] + ',' + (p[1] + dy)).join(' '),
        fill: 'none', stroke: color, 'stroke-width': width, 'stroke-dasharray': dash || 'none'
    }, parent);
}
const pairs = s => s.trim().split(/\s+/).map(p => p.split(',').map(Number));
const even = v => Math.round(v / 2) * 2;
const barX = i => 11 + 8 * i;

// clip for the price pane
const clip = el('clipPath', { id: 'price' });
el('rect', { x: 10, y: 192, width: 2774, height: 1102 }, clip);
const main = el('g', { 'clip-path': 'url(#price)' });

// day separators
vline(275, 192, 1294, '#a9a9a9', '8 6');
[658, 1043, 1427, 1811].forEach(x => vline(x, 224, 1294, '#a9a9a9', '8 6'));

// pivots and ranges: x1 x2 y color dash width
const C = '#40e0d0', M = '#ff20ff', Y = '#ffff30', O = '#daa030', D = '#1e90ff', W = '#ffffff', B = '#0020ff', S = '#ffb090', G = '#8fbc6c';
const levels = [
    [10, 275, 303, '#1a7a1a'], [10, 275, 383, '#1f881f'], [10, 275, 513, '#2c9a2c'], [10, 275, 585, '#40a038'],
    [10, 275, 615, '#4aa040', SIX], [10, 275, 643, '#57a64c'], [10, 275, 723, '#6fb85c'], [10, 275, 853, '#8ac070'],
    [10, 275, 925, '#a0c880'], [10, 275, 955, '#a8d088', SIX], [10, 275, 983, '#b8d890'], [10, 275, 1063, '#d4dca0'],
    [66, 204, 1009, O, SIX], [10, 28, 1039, D, SIX], [10, 268, 1053, C, DASHDOT], [10, 28, 1129, O], [10, 268, 1171, S, SIX],
    [80, 228, 1182, W, '', 4], [10, 275, 1193, W], [10, 268, 1197, C, DASHDOT], [66, 211, 1199, M, DASHDOT],
    [10, 268, 1203, Y, DASHDOT], [10, 268, 1217, G, SIX], [195, 331, 1109, M, SIX], [202, 331, 1151, D, DASHDOT],
    [195, 331, 1249, M, SIX], [287, 412, 1265, D, SIX], [14, 80, 1286, B, '', 4],

    [275, 658, 271, '#70b860'], [275, 658, 401, '#82bc6a'], [275, 658, 473, '#9ccc78'], [275, 658, 501, '#acd488', SIX],
    [275, 658, 529, '#bcdc94'], [275, 652, 599, C, DASHDOT], [275, 658, 611, '#d4e4a0'], [275, 652, 717, S, SIX],
    [450, 588, 555, O, SIX], [578, 716, 705, M, SIX], [327, 466, 732, B, '', 4], [464, 612, 736, W, '', 4],
    [275, 652, 741, C, DASHDOT], [275, 652, 763, G, SIX], [275, 652, 775, Y, DASHDOT], [597, 730, 765, D, DASHDOT],
    [452, 588, 795, M, DASHDOT], [579, 720, 817, M, SIX], [275, 658, 869, '#ffdeb0'], [275, 658, 951, '#ffcca0'],
    [275, 652, 977, '#ffc8a0', SIX], [275, 658, 1007, '#ffc09a'], [275, 658, 1079, '#ffb090'], [298, 412, 1105, D, SIX],
    [275, 652, 1119, C, DASHDOT], [275, 412, 1165, O, DASHDOT], [275, 658, 1209, '#f0a080'], [450, 588, 1207, O, SIX],
    [275, 652, 1290, '#f0a080', SIX],

    [658, 1043, 265, '#bcdc94'], [658, 1043, 421, '#d4e4a0'], [658, 1040, 503, C, DASHDOT], [658, 768, 561, D, SIX],
    [658, 1040, 625, S, SIX], [658, 1040, 643, Y, DASHDOT], [658, 1040, 665, C, DASHDOT], [658, 1040, 669, W, '24 6'],
    [658, 800, 691, O, DASHDOT], [705, 852, 682, B, '', 4], [658, 1040, 715, G, SIX], [834, 972, 447, O, SIX],
    [962, 1100, 509, M, SIX], [848, 996, 526, W, '', 4], [838, 972, 541, M, DASHDOT], [986, 1100, 689, M, SIX],
    [966, 1100, 711, D, DASHDOT], [834, 972, 809, O, SIX], [658, 780, 821, D, SIX], [658, 1040, 855, C, DASHDOT],
    [658, 1043, 919, '#ffdeb0'], [658, 1043, 1073, '#ffcca0'], [658, 1040, 1127, '#ffc8a0', SIX], [658, 1043, 1183, '#ffc09a'],

    [1043, 1427, 257, '#82bc6a'], [1218, 1355, 245, O, SIX], [1043, 1427, 351, '#9ccc78'], [1043, 1420, 371, C, DASHDOT],
    [1043, 1420, 389, '#acd488', SIX], [1043, 1427, 425, '#bcdc94'], [1043, 1427, 529, '#d4e4a0'], [1043, 1420, 667, S, SIX],
    [1094, 1236, 676, B, '', 4], [1043, 1180, 683, D, SIX], [1043, 1420, 697, W, '24 6'], [1043, 1420, 705, Y, DASHDOT],
    [1043, 1420, 713, C, DASHDOT], [1043, 1420, 725, G, SIX], [1235, 1380, 710, W, '', 4], [1225, 1355, 723, M, DASHDOT],
    [1346, 1484, 603, M, SIX], [1051, 1180, 801, O, DASHDOT], [1347, 1484, 745, M, SIX], [1352, 1484, 759, D, DASHDOT],
    [1043, 1427, 861, '#ffdeb0'], [1043, 1420, 907, C, DASHDOT], [1043, 1427, 967, '#ffcca0'], [1043, 1420, 1003, '#ffc8a0', SIX],
    [1043, 1427, 1041, '#ffc09a'], [1043, 1427, 1135, '#ffb090'],

    [1427, 1811, 283, '#9ccc78'], [1427, 1805, 343, '#acd488', SIX], [1427, 1811, 401, '#bcdc94'], [1427, 1811, 567, '#d4e4a0'],
    [1427, 1562, 615, D, SIX], [1427, 1805, 687, C, DASHDOT], [1602, 1740, 673, O, SIX], [1427, 1805, 789, S, SIX],
    [1478, 1564, 830, B, '', 4], [1427, 1805, 837, W, '24 6'], [1427, 1805, 845, C, DASHDOT], [1427, 1562, 867, D, SIX],
    [1427, 1805, 881, Y, DASHDOT], [1427, 1805, 885, G, SIX], [1731, 1867, 793, D, DASHDOT], [1616, 1764, 916, W, '', 4],
    [1614, 1740, 987, O, SIX], [1614, 1740, 989, M, DASHDOT], [1427, 1805, 969, C, DASHDOT], [1427, 1811, 1107, '#ffdeb0'],
    [1427, 1811, 1271, '#ffcca0'],

    [1811, 2195, 249, '#62b052'], [1811, 2195, 337, '#70b860'], [1811, 2195, 479, '#82bc6a'], [1811, 2195, 559, '#9ccc78'],
    [1811, 2190, 591, '#acd488', SIX], [1811, 2195, 621, '#bcdc94'], [1833, 1948, 631, D, SIX], [1811, 2195, 709, '#d4e4a0'],
    [1811, 2190, 719, C, DASHDOT], [2057, 2123, 761, O, SIX], [1811, 2190, 825, S, SIX], [1811, 2190, 851, W, '24 6'],
    [1994, 2123, 855, M, DASHDOT], [1811, 2190, 867, C, DASHDOT], [1811, 2190, 875, G, SIX], [1811, 2190, 881, Y, DASHDOT],
    [1811, 1948, 897, D, SIX], [2003, 2148, 910, W, '', 4], [1811, 2195, 991, '#ffdeb0'], [1811, 2190, 991, C, DASHDOT],
    [1855, 2004, 1010, B, '', 4], [2114, 2252, 659, M, SIX], [1986, 2123, 1031, O, SIX], [2114, 2252, 1017, M, SIX],
    [2123, 2252, 857, D, DASHDOT], [1811, 2195, 1079, '#ffcca0'], [1811, 2190, 1109, '#ffc8a0', SIX], [1811, 2195, 1141, '#ffc09a'],
    [1811, 2195, 1221, '#ffb090']
];
levels.forEach(l => hline(...l));

// candles: high, body top, body bottom, low and direction, in steps of k below y0
const runs = [
    { from: 0, y0: 700, k: .408, rows: `1258,1302,1420,1420u 1270,1285,1366,1366u 1258,1270,1327,1327u 1294,1294,1318,1348d 1278,1284,1307,1318u
        1235,1275,1297,1308u 1205,1235,1288,1288u 1200,1240,1264,1272u 1148,1198,1253,1258u 1150,1190,1228,1228u 1122,1177,1213,1240u
        1115,1161,1195,1212u 1068,1156,1180,1182u 1137,1166,1203,1274d 1190,1191,1288,1322d 1215,1236,1297,1347d 1220,1240,1270,1302u
        1190,1234,1254,1288u 1098,1137,1244,1262u 1062,1102,1195,1195u 1078,1141,1152,1175u 1000,1088,1146,1170u 995,1083,1121,1146u
        990,1102,1127,1170d 1112,1112,1165,1342d 1137,1137,1212,1298d 1195,1200,1230,1346d 1195,1210,1283,1386d 1245,1249,1307,1386d
        1161,1220,1278,1322u 1176,1245,1273,1298d 1190,1215,1262,1322u 1088,1150,1264,1270u 905,1083,1190,1190u -220,-100,1050,1050u
        -358,-151,660,680u -202,-68,210,240u -84,93,112,200d 14,98,118,272d -182,-117,112,118u -182,-5,140,225d 43,43,215,298d
        127,127,313,390d 205,220,278,396d 185,246,264,322d 220,240,260,308u 28,118,254,254u 82,118,171,206u 60,142,171,220d
        130,156,171,196d 108,142,176,205u 118,132,166,200u 118,132,150,205u 88,137,210,274d 175,185,234,238d 113,200,210,250d
        58,113,206,220u 50,118,160,166u 60,113,142,156u 60,122,156,160u 122,122,180,206d 150,156,215,235d 160,171,196,222d
        185,196,230,264d 195,210,240,290d 160,190,225,244u 137,185,210,222u 55,113,206,215u 34,78,160,170u 10,118,210,260d
        142,160,190,284d 70,156,166,298d -16,43,160,166u` },
    { from: 73, y0: 180, k: .357, rows: `1305,1362,1578,1578u 1160,1238,1472,1472u 1114,1181,1355,1355u 1065,1131,1271,1327u 1080,1198,1260,1400d
        1226,1226,1338,1439d 1277,1277,1389,1460d 1327,1327,1422,1528d 1316,1395,1434,1462d 1390,1400,1440,1555d 1370,1416,1495,1562d
        1350,1450,1490,1614d 1265,1332,1472,1490u 1210,1366,1406,1455u` },
    { from: 87, y0: 180, k: .408, rows: `1072,1130,1215,1298u 1062,1128,1170,1172u 990,1098,1150,1195u 1003,1122,1147,1180d 945,1050,1138,1190u
        780,896,1097,1097u 857,995,1098,1437d 857,1045,1106,1542d 652,990,1078,1078u 768,887,1035,1048u 758,838,965,965u 750,815,902,902u
        812,838,856,858u 808,833,848,852u 812,838,853,930d 838,843,877,916d 857,857,915,1000d 803,867,892,945u 833,877,950,980d
        911,911,1033,1083d 970,970,1111,1142d 1040,1040,1110,1140d 1073,1073,1122,1140d 1098,1098,1134,1146d 1112,1112,1170,1225d
        1142,1142,1215,1240d 1160,1176,1190,1240d 1083,1122,1186,1240u 1078,1088,1155,1155u 1063,1117,1127,1160d 1112,1122,1147,1196d
        1130,1130,1273,1317d 1200,1200,1327,1400d 1264,1264,1484,1552d 1372,1372,1568,1700d 1520,1525,1650,1720d 1480,1520,1548,1650u
        1465,1535,1600,1700d 1552,1552,1620,1700d 1500,1530,1600,1660u 1505,1530,1568,1610u 1455,1530,1548,1640u 1210,1392,1540,1540u
        975,1200,1465,1465u 157,671,1337,1337u 445,578,1010,1010u 540,794,1170,1352d 980,980,1255,1520d 1112,1117,1230,1387d
        1142,1170,1293,1455d 1240,1240,1620,1720d 1427,1427,1700,1760d 1500,1560,1780,1880d 1510,1600,1780,1840u 1450,1530,1700,1700u
        1345,1450,1568,1570u 1333,1432,1510,1525u 1437,1475,1485,1530d 1460,1485,1503,1555d 1460,1490,1495,1520u 1470,1480,1498,1568d
        1440,1450,1490,1490u 1410,1445,1480,1485u 1327,1352,1455,1460u 1290,1308,1405,1405u 1280,1303,1350,1385u 1250,1300,1333,1333u
        1225,1285,1320,1325u 1155,1196,1295,1300u 1048,1166,1254,1254u 1158,1205,1215,1254u 1200,1200,1225,1250d 1176,1215,1235,1260d
        1200,1220,1245,1250d 1220,1230,1275,1305d 1245,1245,1290,1308d 1180,1205,1254,1290u 1068,1132,1235,1235u 1034,1117,1186,1186u
        1098,1147,1367,1430d 1254,1254,1435,1485d 1068,1190,1347,1445u 1107,1270,1396,1480d 1328,1328,1560,1620d 1465,1470,1540,1600d
        1450,1505,1515,1560d 1318,1433,1527,1550u 1328,1367,1455,1520u 1340,1393,1407,1435u 1400,1402,1508,1560d 1455,1510,1560,1620d
        1362,1422,1518,1545u` },
    { from: 179, y0: 400, k: .408, rows: `750,911,946,1060d 667,789,931,1005u 730,857,936,1098d 897,897,1094,1166d 960,965,1175,1278d
        1050,1090,1180,1288d 1024,1086,1132,1190u 1024,1107,1166,1210d 1112,1137,1156,1225d 1050,1090,1150,1160u 1073,1122,1180,1220d
        1147,1150,1259,1318d 1200,1200,1240,1310d 1180,1215,1318,1357d 1264,1264,1396,1430d 1328,1328,1392,1440d 1323,1357,1377,1410d
        1337,1357,1372,1405u 1318,1362,1382,1410d 1367,1367,1430,1465d 1278,1338,1400,1475u 1259,1274,1372,1372u 1205,1269,1327,1327u
        1180,1186,1298,1298u 1100,1147,1249,1249u 1107,1142,1200,1215u 1132,1161,1176,1215u 1150,1161,1171,1235u 1122,1151,1171,1180u
        1132,1156,1171,1180d 1161,1161,1200,1220d 1161,1176,1186,1240d 1028,1088,1186,1215u 848,946,1132,1132u 794,872,1038,1038u
        838,936,955,1000u 682,838,951,970u 730,779,892,906u 563,676,833,833u 638,755,975,1063d 838,867,965,1043d 911,911,1004,1107d
        955,955,1058,1132d 1004,1004,1166,1210d 1083,1083,1176,1215d 1073,1127,1171,1215d 1137,1147,1225,1288d 1156,1186,1200,1274d
        1093,1151,1196,1210u 1112,1171,1200,1274d 1068,1142,1186,1225u 1112,1161,1431,1548d 1093,1186,1298,1495u 911,1019,1245,1245u
        882,970,1132,1132u 892,960,1053,1053u 936,1010,1019,1083d 1010,1014,1078,1122d 1038,1038,1161,1190d 1098,1147,1196,1235d
        1142,1147,1180,1245d 1147,1161,1196,1220d 1156,1175,1182,1220d 1156,1166,1180,1190u 1166,1175,1186,1205d 1166,1171,1180,1184u
        1122,1137,1176,1205u 1118,1127,1161,1161u 1122,1137,1180,1230d 1156,1156,1245,1284d 1180,1196,1249,1284d 1166,1210,1225,1284u
        1161,1196,1220,1220u 1068,1102,1210,1215u 632,1044,1161,1230u 1000,1098,1132,1235d 1073,1110,1160,1215d 1068,1137,1180,1215d
        1107,1147,1293,1366d 1220,1220,1401,1513d 1245,1298,1313,1465u 1235,1303,1313,1377d 1088,1142,1313,1357u 1058,1102,1230,1269u
        955,1098,1176,1210u 843,902,1161,1180u 838,857,1034,1034u 804,833,951,965u 804,853,892,965u 784,867,892,916d 872,877,897,1014d
        700,769,892,892u 730,828,872,926d 848,848,970,1040d` }
];
const volumes = (`12 6 6 2 4 6 4 10 10 16 16 12 12 12 12 8 8 12 16 14 12 20 24 24 24 20 22 18 16 14 16 18 20 30 70 58 54 50 50 36 34 34 30 26 24 20
    18 20 20 10 6 4 10 10 8 12 18 18 16 12 12 8 6 8 6 8 8 10 18 16 24 22 30 22 26 20 28 20 20 18 18 20 22 24 22 32 26 26 26 18 16 20
    24 26 34 88 62 56 48 40 34 36 28 30 24 22 26 20 22 18 20 18 16 18 20 16 14 16 14 18 22 24 20 18 16 14 12 12 14 22 38 44 50 52 46 42
    40 34 38 30 36 32 34 30 24 18 14 12 14 12 10 12 14 18 20 18 16 22 24 20 22 18 16 14 16 18 22 24 18 20 18 16 22 26 18 20 16 14 18 20
    16 12 18 14 12 10 12 14 10 8 14 18 16 14 12 16 22 24 20 18 12 10 8 10 12 8 12 16 18 22 24 26 22 24 28 20 24 18 16 20 12 10 12 14 16
    20 14 32 28 24 20 18 22 16 14 16 12 10 14 12 16 18 20 16 14 18 22 16 14 18 20 24 66 38 34 36 28 24 30 26 22 24 28 30 26 22 20 24 26
    28 26 10`).trim().split(/\s+/).map(Number);

runs.forEach(run => {
    run.rows.trim().split(/\s+/).forEach((row, n) => {
        const i = run.from + n, x = barX(i);
        const color = row.endsWith('u') ? '#1fb8ff' : '#000';
        const [h, t, b, l] = row.slice(0, -1).split(',').map(v => even(run.y0 + v * run.k));
        box(x - 1, h, 2, l - h, color, main);
        box(x - 3, t, 6, Math.max(b - t, 2), color, main);
        const v = i === 272 ? 10 : volumes[Math.min(i, volumes.length - 2)];
        box(x - 3, 1294 - v, 6, v, color, main);
    });
});

// weekly VWAP with deviation bands
const offsets = [[0, 4], [49, 2], [101, 2, '6 3'], [301, 2, '6 3'], [353, 2], [402, 4]];
const vwap = pairs(`259,1004 275,945 280,863 288,700 298,605 307,585 317,574 324,557 330,550 337,553 349,566 363,574 379,574 395,570 461,569
    482,566 505,566 528,569 555,568 588,567 606,561 624,551 659,545 715,537 748,528 773,521 797,510 845,495 870,490 928,486 969,486 996,492
    1034,497 1059,497 1068,492 1097,492 1122,497 1160,501 1199,506 1257,506 1286,504 1330,502 1379,504 1440,508 1470,510 1520,517 1549,522
    1589,529 1639,536 1694,542 1783,542 1811,546 1888,551 1937,555 1987,558 2037,560 2082,566 2188,566`);
const anchored = pairs(`1123,713 1127,670 1131,641 1139,606 1148,586 1156,572 1168,580 1180,586 1194,586 1206,581 1219,570 1238,557 1260,539
    1286,528 1316,521 1333,512 1349,514 1362,512 1388,523 1417,526 1442,532 1460,532 1485,543 1525,556 1559,571 1594,587 1639,598 1694,606
    1714,606 1743,600 1783,600 1848,609 1908,610 1957,616 2007,620 2052,622 2082,626 2146,626 2188,622`);
const regression = pairs(`1123,561 1165,580 1233,610 1282,631 1330,647 1379,662 1440,678 1490,692 1539,703 1589,711 1639,718 1689,722 1748,726
    1868,726 1937,720 2012,712 2062,704 2111,695 2188,679`);
offsets.forEach(o => curve(vwap, o[0], '#00003c', o[1], o[2], main));
curve(vwap, 201, '#e9967a', 5, '', main);
offsets.forEach(o => curve(anchored, o[0], '#8fbc8f', o[1], o[2], main));
curve(anchored, 202, '#24ff7d', 5, '', main);
curve(regression, 0, '#0019d1', 5, '', main);
curve(regression, 137, '#ffd32a', 5, '', main);
curve(regression, 275, '#0019d1', 5, '', main);

// pivot names
[[274, 208, 'R161', '#62b052'], [274, 290, 'R138', '#70b860'], [274, 418, 'R100', '#82bc6a'], [274, 490, 'R78', '#9ccc78'], [274, 546, 'R61', '#bcdc94'],
 [274, 628, 'R38', '#d4e4a0'], [274, 758, 'D1', '#ffffd0'], [274, 886, 'S38', '#ffdeb0'], [274, 968, 'S61', '#ffcca0'], [274, 1024, 'S78', '#ffc09a'],
 [274, 1096, 'S100', '#ffb090'], [274, 1226, 'S138', '#f0a080'],
 [657, 282, 'R61', '#bcdc94'], [657, 438, 'R38', '#d4e4a0'], [657, 686, 'D1', '#ffffd0'], [657, 936, 'S38', '#ffdeb0'], [657, 1090, 'S61', '#ffcca0'], [657, 1200, 'S78', '#ffc09a'],
 [1042, 274, 'R100', '#82bc6a'], [1042, 368, 'R78', '#9ccc78'], [1042, 442, 'R61', '#bcdc94'], [1042, 546, 'R38', '#d4e4a0'], [1042, 712, 'D1', '#ffffd0'],
 [1042, 880, 'S38', '#ffdeb0'], [1042, 984, 'S61', '#ffcca0'], [1042, 1058, 'S78', '#ffc09a'], [1042, 1152, 'S100', '#ffb090'],
 [1426, 300, 'R78', '#9ccc78'], [1426, 418, 'R61', '#bcdc94'], [1426, 584, 'R38', '#d4e4a0'], [1426, 854, 'D1', '#ffffd0'], [1426, 1124, 'S38', '#ffdeb0'], [1426, 1290, 'S61', '#ffcca0'],
 [1810, 206, 'R178', '#50a848'], [1810, 268, 'R161', '#62b052'], [1810, 354, 'R138', '#70b860'], [1810, 496, 'R100', '#82bc6a'], [1810, 576, 'R78', '#9ccc78'],
 [1810, 638, 'R61', '#bcdc94'], [1810, 726, 'R38', '#d4e4a0'], [1810, 868, 'D1', '#ffffd0'], [1810, 1008, 'S38', '#ffdeb0'], [1810, 1096, 'S61', '#ffcca0'],
 [1810, 1158, 'S78', '#ffc09a'], [1810, 1238, 'S100', '#ffb090']].forEach(p => text(...p));

// market profile around the navy line
const left = `0 0 0 0 0 0 0 0 0 0 0 0 0 0 0 0 0 0 0 0 0 0 7 7 7 7 15 15 23 23 15 15 15g 15 23 23 31 47 55 47 47 47 63 63 63 63 63 47 63 79 79 87 103 95 95
    103 103 87 79 79 79 87 87 79 79 55 55g 63 79 63g 79 95 79 103 135 143 151 159 191g 159 135 111 87 87 87 95 87 55 47 31 39 47 39 31 23 23 31 23 31g
    23 23 23 23 15 7 7 7 7 7 7`.split(/\s+/);
const right = `15s 23 23 15 15 23 15 23 23 23 15 15 15 15 15 15 15 23 15 23 39 39 47 39 47 55 63 71 79 87 95 87 95 119 127 119 127 143 143 135 135 127
    135 135 135 135 143 127 143 159 159 159 175 159 151s 159 175 159 143 135 135 143 151 151 135 95 95 103 103 103 111 111 95 119 143 151 151 151 183s
    151 127 103 79 87 87 95 87 47 39 31 31 39 31 15 15 15 23 15 23s 15 15 15 7 7`.split(/\s+/);
function mix(a, b, t) {
    return 'rgb(' + a.map((v, i) => Math.round(v + (b[i] - v) * Math.min(t, 1))) + ')';
}
left.forEach((v, n) => {
    const w = parseInt(v);
    box(2443 - w, even(496 + n * 4.902), w, 2, v.endsWith('g') ? '#24ff7d' : mix([140, 180, 145], [50, 56, 120], w / 150));
});
right.forEach((v, n) => {
    const w = parseInt(v);
    box(2443, even(496 + n * 4.902), w, 2, v.endsWith('s') ? '#e9967a' : mix([150, 146, 165], [40, 40, 120], w / 150));
});
[354, 359, 364, 369, 374, 379, 384].forEach(y => box(2443, even(y + 44), 8, 2, '#9692a5'));
[1177, 1182, 1187].forEach(y => box(2443, even(y), 8, 2, '#9692a5'));

// orders, bid and crosshair lines
function full(y, color, dash, width) {
    el('line', { x1: 10, x2: 2784, y1: y, y2: y, stroke: color, 'stroke-width': width || 2, 'stroke-dasharray': dash || 'none' });
}
full(741, '#adff2f', LIME);
full(767, '#adff2f', LIME);
full(807, '#afeeee');
full(824, '#dc143c', LIME, 4);
full(755, '#000');

vline(259, 192, 1604, '#e9967a', '36 12');
vline(1123, 224, 1604, '#24ff7d', '36 12');
vline(2195, 228, 1294, '#b8b0a8');
vline(2195, 228, 1604, '#daa020', SIX);
vline(2179, 1300, 1604, '#808080', '36 12');
vline(2243, 226, 1604, '#0018ff', SIX);
vline(2371, 192, 1604, '#ff20ff', SIX);
vline(2387, 192, 1604, '#fff', SIX);
vline(2443, 192, 1604, '#00003c', '36 12');
vline(2499, 192, 1604, '#1e90ff', SIX);
[[2438, 193], [2438, 1287]].forEach(p => { box(p[0], p[1], 10, 9, '#00003c'); box(p[0] + 2, p[1] + 2, 6, 6, '#fff'); });
[[254, 193], [254, 1287]].forEach(p => { box(p[0], p[1], 10, 9, '#e9967a'); box(p[0] + 2, p[1] + 2, 6, 6, '#fff'); });

// info in the corner
const N = '#00003c', L = '#e0ffff';
el('path', { d: 'M16 205h14l-7 8z', fill: '#afeeee' });
text(39, 214, 'EURUSD,M30', '#afeeee', 'sym');
[[17, 271, 'AR', N], [73, 271, '9d / c.R', N], [185, 271, 'p.DR', N], [261, 271, 'Weekly', N], [345, 271, 'Monthly', N], [443, 271, 'High / Mid / Low', N],
 [17, 292, 'Pips', N], [73, 292, '96 | 76', O], [185, 292, '76', L], [262, 292, '104', O], [343, 292, '97', O], [445, 292, '39  |  9  |  57', L],
 [17, 321, 'Fibo', N], [73, 321, 'R38 / Piv / S38', N], [251, 321, 'R61 / S61', N], [377, 321, 'R78 / S78', N], [503, 321, 'R100 / S100', N],
 [17, 342, 'Pips', N], [73, 342, '-10593  |  10622  |  38', L], [252, 342, '-10575  |  56', L], [377, 342, '-10562  |  69', L], [503, 342, '-10546  |  85', L]
].forEach(t => text(...t, 'info'));
text(22, 736, '#214416667 sell 0.05', '#afeeee');
text(22, 762, '#214410354 sell 1.00', '#afeeee');
text(22, 819, '#214416667 tp', '#afeeee');
text(22, 819, '#214410354 tp', '#afeeee');
text(2180, 232, 'Wk Ex Hi 1', '#90ee90');
text(2190, 481, 'Wk Hi', '#90ee90');
text(2184, 729, 'Wk Mid Hi', '#3cb371');
text(2184, 1229, 'Wk Mid Lo', '#f08080');

function tag(y, price, color) {
    el('path', { d: `M2228 ${y}h20M2249 ${y - 11}h82v23h-82z`, stroke: color, 'stroke-width': 2, fill: 'none' });
    text(2250, y + 9, price, color, 'tag');
}
tag(615, '1.06610', '#24ffff');
tag(1085, '1.05646', '#000');

['W: 2981 / 1177 / 39%', 'Prev: 2997 / 3387 / 113%', 'Past: 3005 / 3185 / 106%', 'Last: 3010 / 3159 / 105%', 'V ( M1 ): 7.0 / 1.2 / 12.0']
    .forEach((s, i) => text(2763, 1157 + i * 30, s, '#fff', 'stat', 'end'));

// oscillator
const wave = pairs(`10,1493 35,1467 53,1438 67,1415 81,1395 98,1373 105,1370 116,1375 126,1380 147,1380 158,1372 163,1369 172,1372 186,1383 203,1403
    217,1427 231,1450 240,1463 251,1464 267,1453 284,1433 295,1425 302,1424 309,1424 319,1430 333,1443 351,1463 361,1476 368,1477 382,1470
    396,1453 414,1427 428,1409 438,1407 449,1411 463,1420 484,1442 505,1473 523,1501 532,1502 540,1502 561,1477 579,1453 596,1423 610,1400
    623,1389 635,1391 649,1402 666,1423 684,1447 691,1450 702,1450 716,1440 737,1420 758,1393 775,1373 786,1369 800,1371 814,1383 831,1407
    856,1453 884,1497 912,1533 947,1563 979,1581 996,1570 1017,1530 1038,1487 1059,1447 1073,1426 1080,1424 1091,1426 1105,1441 1115,1447
    1130,1441 1166,1415 1222,1369 1267,1328 1280,1321 1290,1321 1313,1330 1359,1415 1424,1508 1506,1552 1550,1578 1570,1585 1617,1534
    1662,1433 1699,1369 1727,1337 1741,1330 1754,1334 1791,1378 1837,1451 1883,1470 1929,1516 1960,1537 1993,1497 2030,1424 2052,1400
    2062,1401 2072,1408 2131,1378 2168,1345 2180,1338 2188,1338`);
const osc = [];
for (let i = -1; i < 545; i++) {
    const x = 11 + 4 * i;
    const k = Math.max(1, wave.findIndex(p => p[0] >= x));
    const [x1, y1] = wave[k - 1], [x2, y2] = wave[k];
    osc.push([x, y1 + (y2 - y1) * (x - x1) / (x2 - x1)]);
}
const mean = (list, n) => list.map((p, i) => {
    const part = list.slice(Math.max(0, i - n), i + 1);
    return [p[0], part.reduce((s, q) => s + q[1], 0) / part.length];
});
const roll = (list, n, pick) => list.map((p, i) => [p[0], pick(...list.slice(Math.max(0, i - n), i + 1).map(q => q[1]))]);
const smooth = mean(osc, 9);
curve(roll(smooth, 17, Math.min), 0, '#20b0f0', 2, '6 4');
curve(roll(smooth, 17, Math.max), 0, '#fa8072', 2, '6 4');
curve(mean(smooth, 7), 0, '#ffcf20', 2, '6 4');
curve(smooth, 0, '#222', 6);
for (let i = 1; i < osc.length; i++) {
    curve([osc[i - 1], osc[i]], 0, osc[i][1] <= osc[i - 1][1] ? '#d8d8d8' : '#5a0a5c', 5);
}
text(992, 1323, '53151', '#afeeee');

text(2604, 1444, '146.84%', '#afeeee', 'pct', 'end');
text(2766, 1444, '+81.30 USD', '#24ff24', 'bold', 'end');
text(2766, 1487, '+7.74', '#24ff24', 'profit', 'end');
text(2766, 1522, '2  |  1.05  |  10.50  |  150.68 USD = 14.4  |  9.2%', '#afeeee', 'bold', 'end');
text(2766, 1553, 'Avg 1.06325  |  SL 0.0  |  0.0%', '#afeeee', 'bold', 'end');
text(2766, 1586, 'ATR 93.9  | sl 58.1  |  tp 120.3  |  N 0.06', '#afeeee', 'bold', 'end');

// frame
el('path', { d: 'M1 1644V183H2870', fill: 'none', stroke: '#777', 'stroke-width': 3 });
el('path', { d: 'M5 1644V187H2868', fill: 'none', stroke: '#444', 'stroke-width': 4 });
box(2874, 182, 6, 1462, '#e4e4e4');
el('path', { d: 'M9 1295V191H2785V1295zM9 1603V1299H2785V1603z', fill: 'none', stroke: '#afeeee', 'stroke-width': 2 });
el('path', { d: 'M2190 192h18l-9 10z', fill: '#afeeee' });

// price scale
for (let i = 0; i < 17; i++) {
    const y = 233 + i * 66;
    box(2786, y - 1, 4, 2, '#afeeee');
    text(2796, y + 6, (1.0739 - i * .00135).toFixed(5), '#afeeee');
}
box(2790, 743, 78, 21, '#000');
text(2796, 760, '1.06324', '#6a6a6a');
box(2790, 796, 78, 22, '#afeeee');
text(2796, 813, '1.06218', '#333');
[[1319, '40.33855'], [1449, '0.00'], [1596, '-46.07408']].forEach(t => text(2791, t[0], t[1], '#afeeee'));
box(2786, 1442, 4, 2, '#afeeee');

// time scale
['12 Dec 2022', '13 Dec 06:30', '13 Dec 14:30', '13 Dec 22:30', '14 Dec 06:30', '14 Dec 14:30', '14 Dec 22:30', '15 Dec 06:30', '15 Dec 14:30',
 '15 Dec 22:30', '16 Dec 06:30', '16 Dec 14:30', '16 Dec 22:30', '19 Dec 06:30', '19 Dec 14:30', '19 Dec 22:30', '20 Dec 06:30', '20 Dec 14:30']
    .forEach((s, i) => {
        box(10 + i * 128, 1604, 2, 6, '#afeeee');
        text(9 + i * 128, 1628, s, '#afeeee', 'time');
    });
[[180, '#e9967a', '2022.12.13 14:00', '#444'], [1044, '#24ff7d', '2022.12.15 20:00', '#333'], [2364, '#00003c', '2022.12.21 06:30', '#6a6a6a']].forEach(t => {
    box(t[0], 1610, 156, 22, t[1]);
    text(t[0] + 78, 1628, t[2], t[3], 'time', 'middle');
});
```
